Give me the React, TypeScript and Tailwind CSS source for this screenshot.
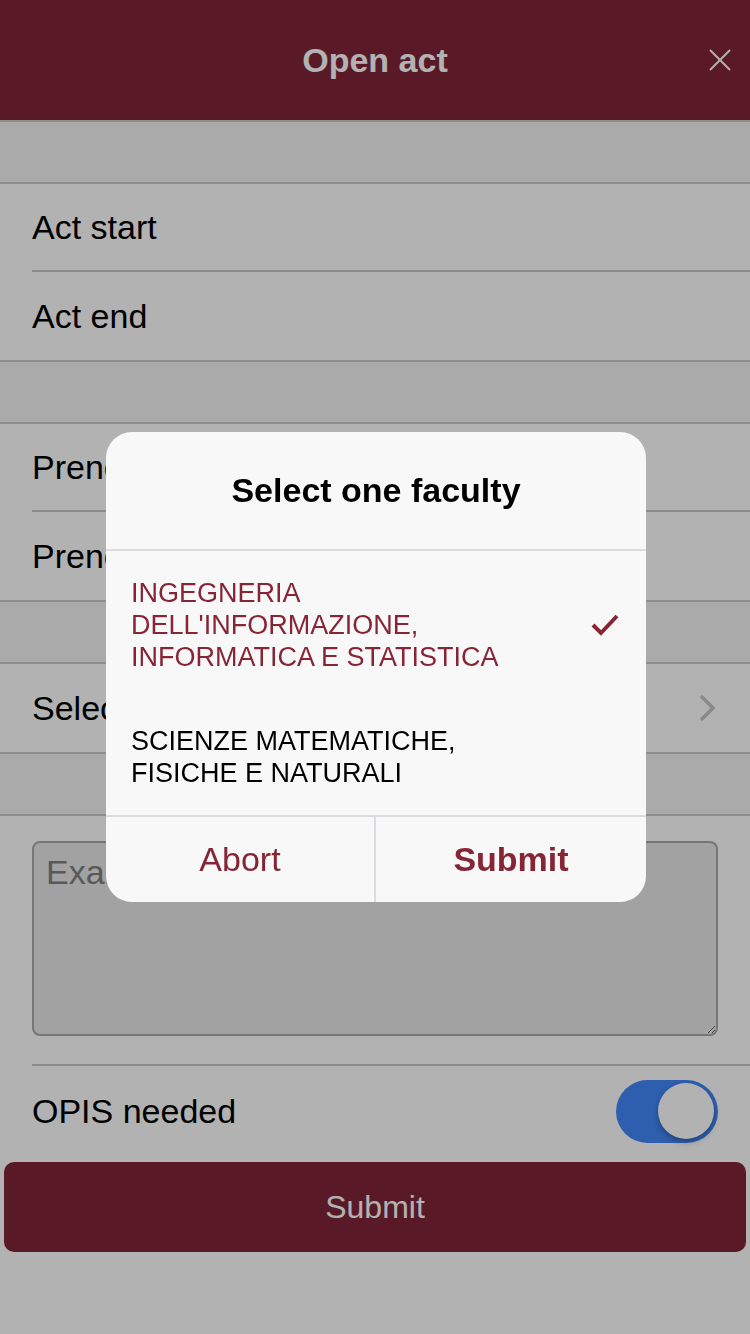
import { useState } from 'react'

const font = { fontFamily: '"Liberation Sans", Arial, sans-serif' }

const faculties = [
  "INGEGNERIA DELL'INFORMAZIONE, INFORMATICA E STATISTICA",
  'SCIENZE MATEMATICHE, FISICHE E NATURALI',
]

function Band() {
  return <div className="h-[62px] bg-[#f4f4f4] border-b-2 border-[#cbcbcb]" />
}

function Row({ label, last, chevron }: { label: string; last?: boolean; chevron?: boolean }) {
  return (
    <div className={last ? 'h-[90px] pl-8 bg-white border-b-2 border-[#cbcbcb]' : 'h-[88px] pl-8 bg-white'}>
      <div
        className={
          last
            ? 'h-full flex items-center justify-between pr-8'
            : 'h-full flex items-center justify-between pr-8 border-b-2 border-[#cbcbcb]'
        }
      >
        <span className="text-[34px] text-black">{label}</span>
        {chevron && (
          <svg width="18" height="30" viewBox="0 0 18 30" className="mr-[2px]">
            <path d="M3 3 L15 15 L3 27" fill="none" stroke="#c4c4c8" strokeWidth="3.5" />
          </svg>
        )}
      </div>
    </div>
  )
}

export default function App() {
  const [selected, setSelected] = useState(0)

  return (
    <div style={font} className="relative min-h-screen bg-white overflow-hidden">
      {/* nav bar */}
      <div className="h-[122px] bg-[#812538] grid grid-cols-[1fr_auto_1fr] items-center border-b-2 border-[#cbcbcb]">
        <div />
        <h1 className="text-[34px] font-bold text-white">Open act</h1>
        <div className="flex justify-end pr-[18px]">
          <svg width="24" height="24" viewBox="0 0 24 24">
            <path d="M2 2 L22 22 M22 2 L2 22" stroke="#ffffff" strokeWidth="2" />
          </svg>
        </div>
      </div>

      <Band />
      <Row label="Act start" />
      <Row label="Act end" last />
      <Band />
      <Row label="Prenotazione inizio" />
      <Row label="Prenotazione fine" last />
      <Band />
      <Row label="Select faculty" last chevron />
      <Band />

      {/* notes */}
      <div className="px-8 pt-[25px] pb-[28px]">
        <textarea
          readOnly
          placeholder="Exam notes"
          className="block w-full h-[195px] rounded-[8px] border-2 border-[#aaaaaa] bg-[#e9e9e9] px-3 py-1 text-[34px] placeholder:text-[#808080]"
        />
      </div>

      <div className="pl-8">
        <div className="h-[92px] border-t-2 border-[#cbcbcb] flex items-center justify-between pr-8">
          <span className="text-[34px] text-black">OPIS needed</span>
          <div className="relative w-[102px] h-[63px] rounded-full bg-[#4388fb]">
            <div className="absolute right-[4px] top-[3.5px] w-[56px] h-[56px] rounded-full bg-white shadow-[0_3px_6px_rgba(0,0,0,0.3)]" />
          </div>
        </div>
      </div>

      <div className="px-1 pt-[6px]">
        <button className="w-full h-[90px] rounded-[10px] bg-[#812538] text-white text-[32px]">Submit</button>
      </div>

      {/* dimmer + picker dialog */}
      <div className="fixed inset-0 bg-black/30 flex items-center justify-center">
        <div className="w-[540px] ml-[2px] rounded-[26px] bg-[#f8f8f8] overflow-hidden">
          <div className="h-[119px] flex items-center justify-center border-b-2 border-[#dcdce0]">
            <h2 className="text-[34px] font-bold text-black">Select one faculty</h2>
          </div>

          {faculties.map((f, i) => (
            <button
              key={f}
              onClick={() => setSelected(i)}
              className="w-full flex items-center justify-between pl-[25px] pr-[27px] py-[26px] text-left"
            >
              <span
                className={
                  i === selected
                    ? 'w-[420px] text-[27px] leading-[32px] text-[#862536]'
                    : 'w-[420px] text-[27px] leading-[32px] text-black'
                }
              >
                {f}
              </span>
              {i === selected && (
                <svg width="28" height="24" viewBox="0 0 28 24">
                  <path d="M2 12 L10 20 L26 3" fill="none" stroke="#862536" strokeWidth="4" />
                </svg>
              )}
            </button>
          ))}

          <div className="grid grid-cols-2 h-[87px] border-t-2 border-[#dcdce0]">
            <button className="text-[34px] text-[#862536] border-r-2 border-[#dcdce0]">Abort</button>
            <button className="text-[34px] font-bold text-[#862536]">Submit</button>
          </div>
        </div>
      </div>
    </div>
  )
}
